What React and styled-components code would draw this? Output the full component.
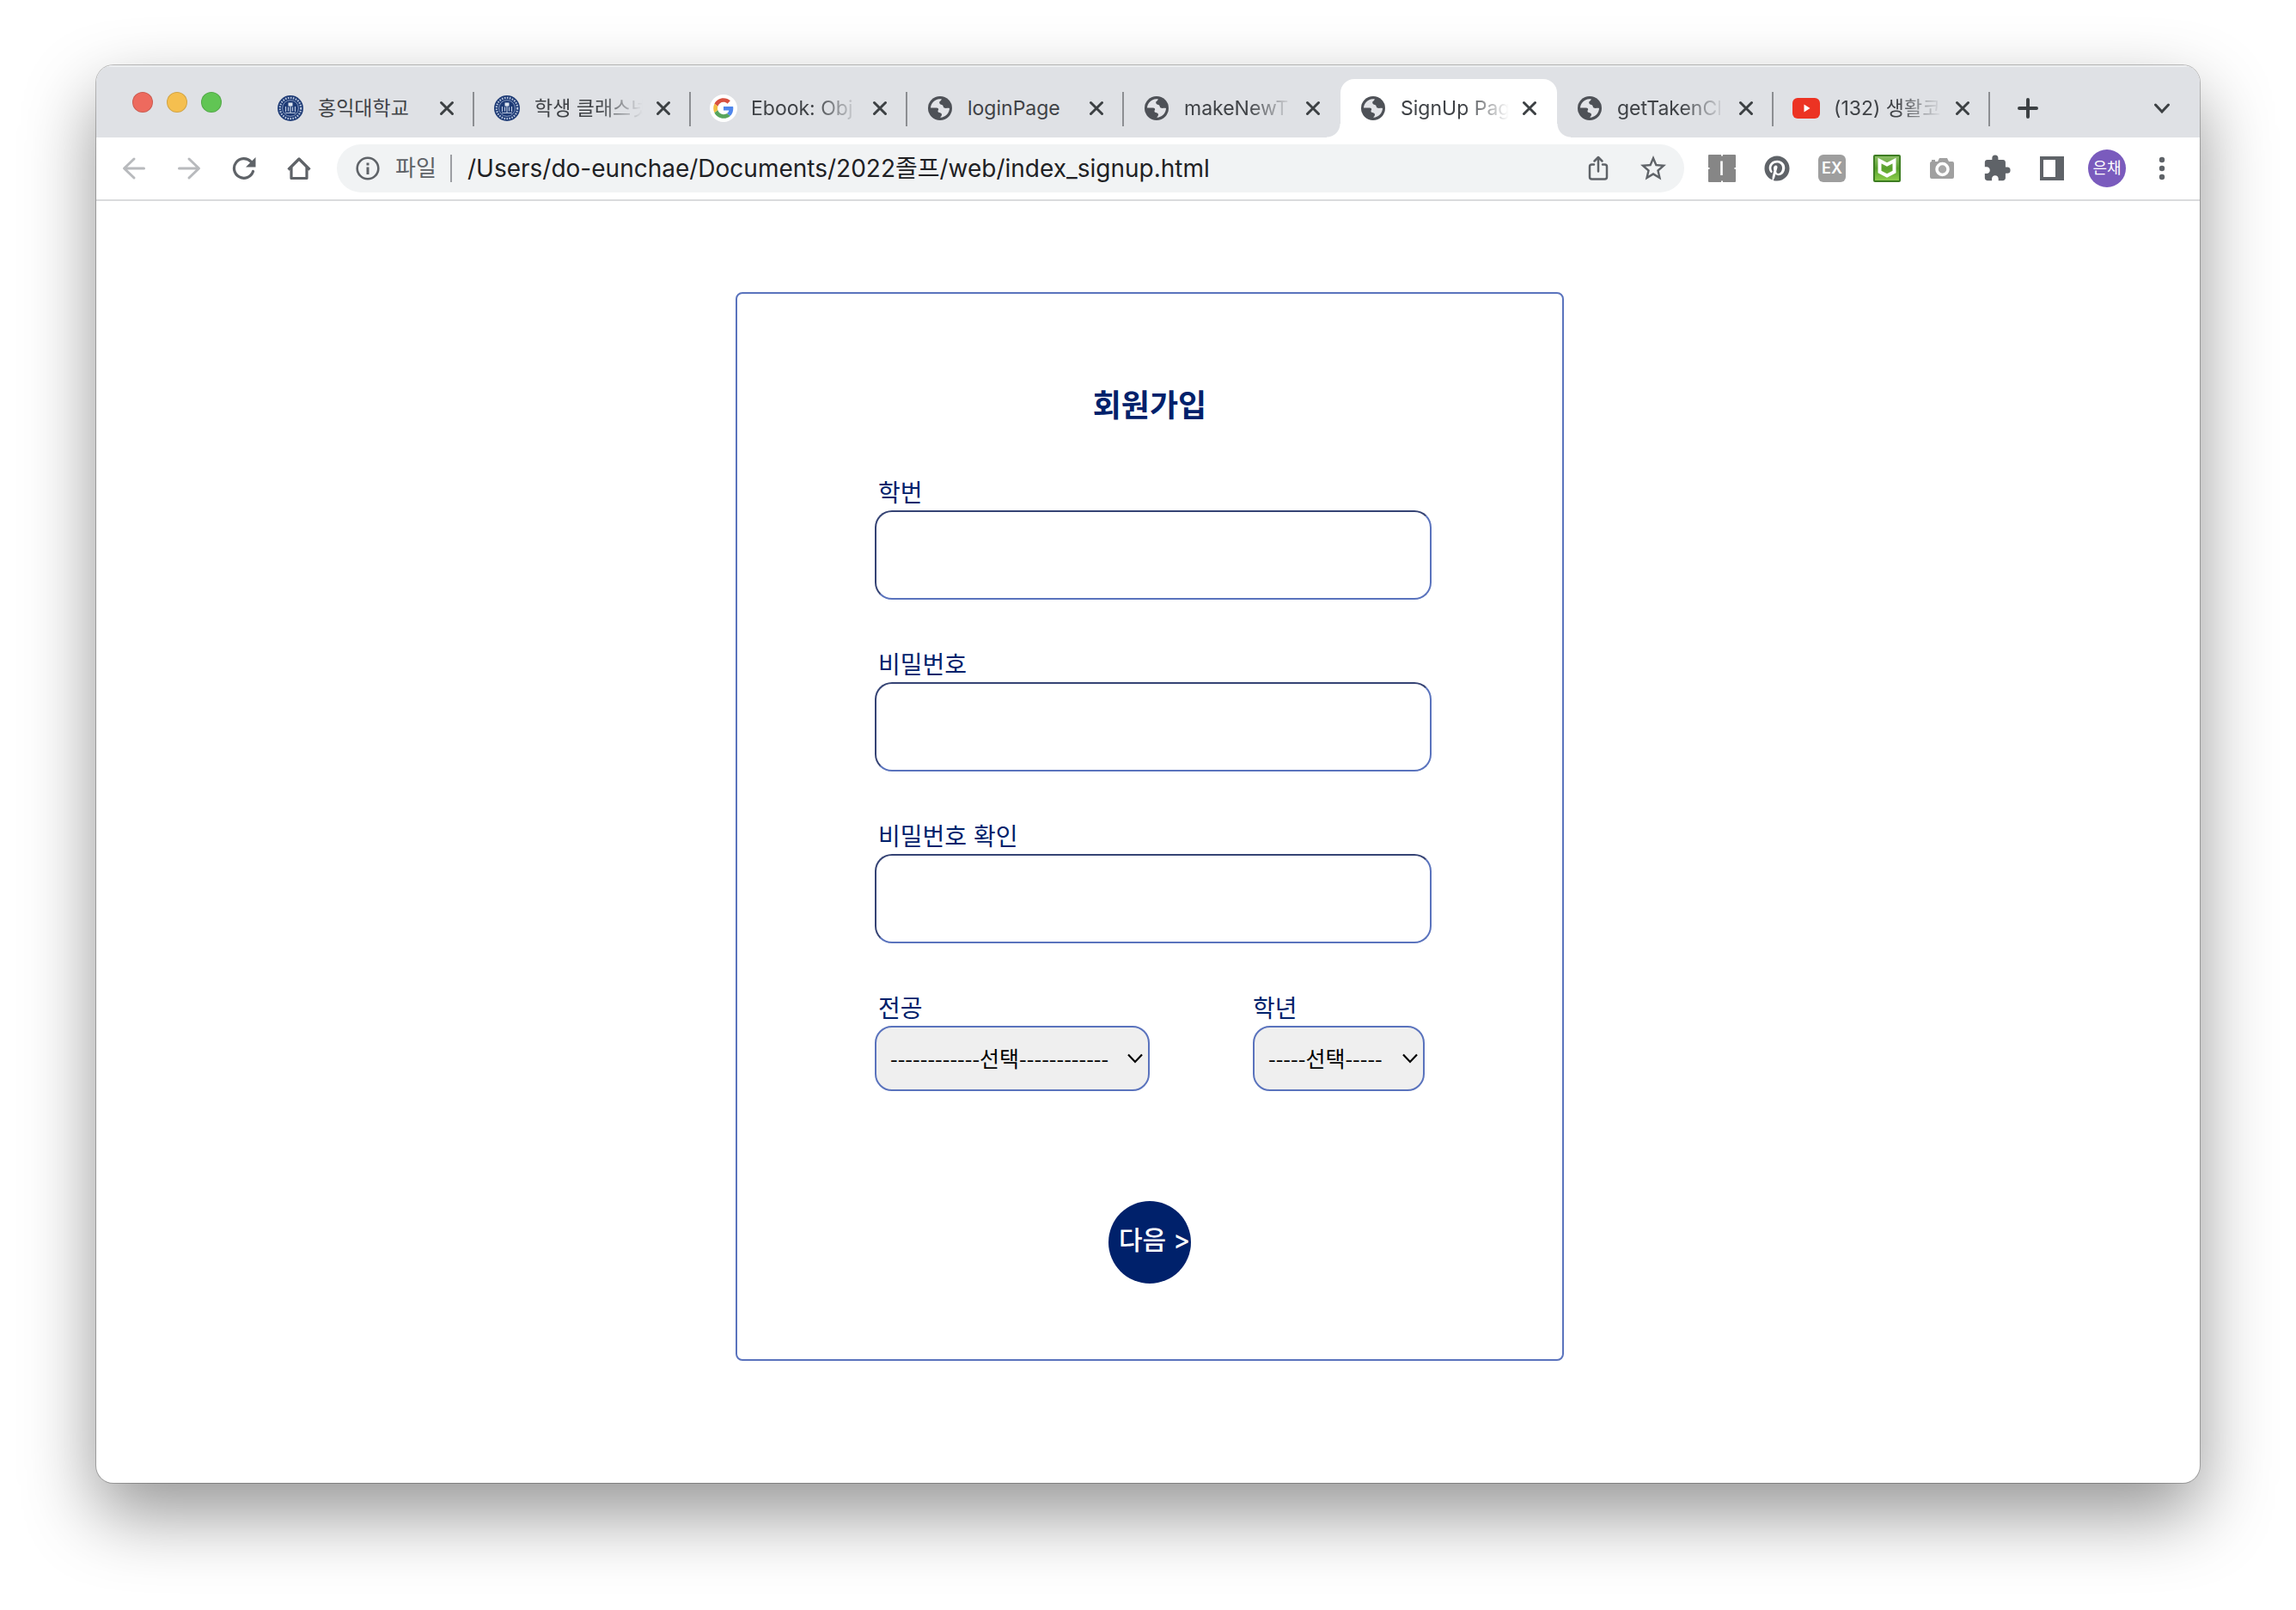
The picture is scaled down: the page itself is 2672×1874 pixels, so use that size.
import React from "react";
import styled, { createGlobalStyle, css } from "styled-components";
import { MdExtension, MdStarOutline } from "react-icons/md";
import { FaPinterest } from "react-icons/fa";

const GlobalStyle = createGlobalStyle`
  *, *::before, *::after { box-sizing: border-box; }
  body {
    margin: 0;
    background: #fff;
    font-family: Inter, "Noto Sans CJK KR", sans-serif;
    color: #202124;
  }
  button, input, select { font: inherit; color: inherit; }
`;

/* ---------- window frame ---------- */

const Desktop = styled.div`
  display: flex;
  min-height: 100vh;
  padding: 76px 112px 148px;
`;

const Window = styled.div`
  flex: 1;
  min-width: 0;
  display: flex;
  flex-direction: column;
  border-radius: 20px;
  overflow: hidden;
  background: #fff;
  box-shadow: 0 0 0 1px rgba(0, 0, 0, 0.24), 0 36px 84px rgba(0, 0, 0, 0.42);
`;

const TabStrip = styled.header`
  display: flex;
  align-items: flex-end;
  height: 84px;
  padding-right: 12px;
  background: #dfe1e5;
  box-shadow: inset 0 2px 0 #eceef0;
`;

const TrafficLights = styled.div`
  display: flex;
  flex: none;
  gap: 16px;
  width: 188px;
  height: 84px;
  padding: 31px 0 0 42px;
`;

const Light = styled.button`
  width: 24px;
  height: 24px;
  padding: 0;
  border: 1px solid rgba(0, 0, 0, 0.14);
  border-radius: 50%;
  background: ${(p) => p.$color};
`;

const Tabs = styled.div`
  display: flex;
`;

const Tab = styled.div`
  position: relative;
  display: flex;
  align-items: center;
  width: 252px;
  height: 68px;
  padding: 0 16px 0 22px;
  color: #3f4246;

  ${(p) =>
    p.$divided &&
    css`
      &::after {
        content: "";
        position: absolute;
        right: 0;
        top: 15px;
        width: 2px;
        height: 40px;
        background: #8c8e92;
      }
    `}

  ${(p) =>
    p.$active &&
    css`
      background: #fff;
      border-radius: 16px 16px 0 0;
      &::before,
      &::after {
        content: "";
        position: absolute;
        bottom: 0;
        width: 16px;
        height: 16px;
      }
      &::before {
        right: 100%;
        background: radial-gradient(circle at 0 0, transparent 15px, #fff 16px);
      }
      &::after {
        left: 100%;
        background: radial-gradient(circle at 100% 0, transparent 15px, #fff 16px);
      }
    `}
`;

const Favicon = styled.span`
  display: grid;
  place-items: center;
  flex: none;
  width: 32px;
  height: 32px;
  margin-right: 16px;
`;

const TabTitle = styled.span`
  flex: 1;
  min-width: 0;
  overflow: hidden;
  white-space: nowrap;
  font-size: 23px;
  line-height: 32px;
  ${(p) =>
    p.$faded &&
    css`
      mask-image: linear-gradient(to right, #000 calc(100% - 52px), transparent);
    `}
`;

const IconButton = styled.button`
  display: grid;
  place-items: center;
  flex: none;
  width: ${(p) => p.$size || 64}px;
  height: ${(p) => p.$size || 64}px;
  padding: 0;
  border: 0;
  background: none;
  color: ${(p) => (p.$muted ? "#b8babd" : "#5f6368")};
`;

const CloseButton = styled(IconButton)`
  margin-left: 8px;
  color: #3c4043;
`;

const StripButton = styled(IconButton)`
  height: 68px;
  color: #3c4043;
  margin-left: ${(p) => (p.$end ? "auto" : "12px")};
`;

/* ---------- toolbar ---------- */

const Toolbar = styled.nav`
  display: flex;
  align-items: center;
  height: 74px;
  padding: 0 12px;
  background: #fff;
  border-bottom: 2px solid #dadbdd;
`;

const AddressBar = styled.div`
  flex: 1;
  min-width: 0;
  display: flex;
  align-items: center;
  height: 56px;
  margin: 0 12px;
  padding: 0 4px;
  border-radius: 28px;
  background: #f1f3f4;
`;

const Scheme = styled.label`
  flex: none;
  width: 66px;
  border-right: 2px solid #9c9ea2;
  font-size: 26px;
  line-height: 32px;
  color: #5f6368;
`;

const UrlInput = styled.input`
  flex: 1;
  min-width: 0;
  padding: 0 0 0 18px;
  border: 0;
  outline: 0;
  background: none;
  font-size: 28px;
  line-height: 40px;
  color: #202124;
`;

const ExLabel = styled.span`
  display: grid;
  place-items: center;
  width: 32px;
  height: 32px;
  border-radius: 6px;
  background: #9e9e9e;
  color: #fff;
  font-size: 18px;
  font-weight: 600;
  line-height: 20px;
`;

const Avatar = styled.span`
  display: grid;
  place-items: center;
  width: 44px;
  height: 44px;
  border-radius: 50%;
  background: #7a5bbd;
  color: #fff;
  font-size: 18px;
  line-height: 24px;
`;

/* ---------- sign-up page ---------- */

const Page = styled.main`
  flex: 1;
  display: flex;
  justify-content: center;
  align-items: flex-start;
  padding: 106px 0 142px 4px;
`;

const Card = styled.form`
  width: 964px;
  max-width: 100%;
  padding: 102px 152px 88px 160px;
  border: 2px solid #5a73bd;
  border-radius: 8px;
  background: #fff;
  color: #00216b;
`;

const Title = styled.h1`
  margin: 0 8px 54px 0;
  font-size: 36px;
  line-height: 56px;
  font-weight: 700;
  text-align: center;
`;

const Fields = styled.div`
  display: flex;
  flex-direction: column;
  gap: 56px;
`;

const FieldRow = styled.div`
  display: flex;
  gap: 120px;
`;

const Field = styled.div`
  display: flex;
  flex-direction: column;
  ${(p) => p.$width && `width: ${p.$width}px;`}
`;

const Label = styled.label`
  padding-left: ${(p) => (p.$flush ? 0 : 4)}px;
  font-size: 28px;
  line-height: 40px;
  font-weight: 400;
`;

const TextInput = styled.input`
  width: 100%;
  height: 104px;
  padding: 0 20px;
  border: 2px solid;
  border-color: #354374 #5a73bd #5a73bd #354374;
  border-radius: 20px;
  outline: 0;
  background: #fff;
  font-size: 28px;
`;

const SelectBox = styled.div`
  position: relative;
  display: flex;
  svg {
    position: absolute;
    right: 7px;
    top: 50%;
    margin-top: -6px;
    pointer-events: none;
  }
`;

const Select = styled.select`
  appearance: none;
  width: 100%;
  height: 76px;
  padding: 0 16px 2px;
  border: 2px solid #5a73bd;
  border-radius: 20px;
  outline: 0;
  background: #efefef;
  color: #000;
  font-family: "Noto Sans CJK KR", sans-serif;
  font-size: 25px;
  font-weight: 400;
`;

const NextButton = styled.button`
  display: block;
  width: 96px;
  height: 96px;
  margin: 128px auto 0 272px;
  padding: 0 0 6px 12px;
  border: 0;
  border-radius: 50%;
  background: #00216b;
  color: #fff;
  font-size: 30px;
  line-height: 40px;
  font-weight: 500;
  text-align: left;
  white-space: nowrap;
`;

/* ---------- drawings ---------- */

const SealIcon = () => (
  <svg width="32" height="32" viewBox="0 0 32 32" fill="none">
    <circle cx="16" cy="16" r="15" fill="#1d3a75" />
    <circle cx="16" cy="16" r="12.2" stroke="#b9c6de" strokeWidth="2.2" strokeDasharray="1.6 1.4" />
    <circle cx="16" cy="16" r="9.4" stroke="#93a5c8" strokeWidth="0.9" />
    <path d="M13.5 9.5h5v4h-5z" fill="#dfe6f1" />
    <path d="M10.5 14v6M13.5 14.5v5M18.500 14.500v5M21.500 14v6M16 13v8M10 21.500h12" stroke="#b9c6de" strokeWidth="1.2" />
  </svg>
);

const GoogleIcon = () => (
  <svg width="32" height="32" viewBox="0 0 32 32">
    <circle cx="16" cy="16" r="16" fill="#fff" />
    <g transform="translate(4.200 4.200) scale(0.492)">
      <path fill="#d8503f" d="M24 9.500c3.540 0 6.710 1.220 9.210 3.600l6.850-6.850C35.900 2.380 30.470 0 24 0 14.620 0 6.510 5.380 2.560 13.220l7.980 6.190C12.430 13.720 17.740 9.500 24 9.500z" />
      <path fill="#4f86ec" d="M46.980 24.550c0-1.570-.15-3.090-.38-4.550H24v9.020h12.940c-.58 2.960-2.260 5.480-4.780 7.180l7.730 6c4.510-4.180 7.090-10.360 7.090-17.650z" />
      <path fill="#f2bd42" d="M10.530 28.590c-.48-1.450-.76-2.990-.76-4.590s.27-3.140.76-4.590l-7.980-6.190C.92 16.460 0 20.120 0 24c0 3.880.92 7.540 2.560 10.780l7.970-6.190z" />
      <path fill="#58a55c" d="M24 48c6.480 0 11.930-2.130 15.890-5.810l-7.730-6c-2.150 1.450-4.920 2.300-8.160 2.300-6.260 0-11.570-4.220-13.470-9.910l-7.980 6.190C6.510 42.620 14.620 48 24 48z" />
    </g>
  </svg>
);

const GlobeIcon = () => (
  <svg width="28" height="28" viewBox="0 0 28 28">
    <circle cx="14" cy="14" r="14" fill="#4e5157" />
    <path
      fill="#e3e4e8"
      d="M3 13.500C3.300 8 7.800 3.600 13.500 3.200C14.500 3.200 15.200 3.300 16 3.500L14.500 5.500C13 6 13 7.500 13.500 8.600C14 10 16 9.600 17 10.500C18 11.500 17.500 13 18.800 13.600C20.500 14.500 23 13.500 25 14C24.800 19.500 21 23.500 16 24.700L14 24.500C16 23 16.500 21.500 15.500 20C14.500 18.800 12 19.500 11.500 18C11 16.500 13 15.500 11.800 14.300C10.500 13.200 8 13.600 3 13.500Z"
    />
  </svg>
);

const YoutubeIcon = () => (
  <svg width="32" height="32" viewBox="0 0 32 32">
    <rect x="0" y="4" width="32" height="24" rx="6" fill="#ec3323" />
    <path d="M13.500 11.500L20.500 16L13.500 20.500Z" fill="#fff" />
  </svg>
);

const CloseIcon = () => (
  <svg width="18" height="18" viewBox="0 0 18 18" stroke="currentColor" strokeWidth="3" strokeLinecap="round">
    <path d="M2.500 2.500L15.500 15.500M15.500 2.500L2.500 15.500" />
  </svg>
);

const PlusIcon = () => (
  <svg width="24" height="24" viewBox="0 0 24 24" stroke="currentColor" strokeWidth="4" strokeLinecap="round">
    <path d="M12 2v20M2 12h20" />
  </svg>
);

const TabMenuIcon = () => (
  <svg width="20" height="12" viewBox="0 0 20 12" fill="none" stroke="currentColor" strokeWidth="3" strokeLinecap="round">
    <path d="M2.500 2L10 10L17.500 2" />
  </svg>
);

const ArrowIcon = ({ forward }) => (
  <svg width="28" height="28" viewBox="0 0 28 28" fill="none" stroke="currentColor" strokeWidth="3" strokeLinecap="round" strokeLinejoin="round">
    <path d={forward ? "M2.500 14H25M14 3L25.500 14L14 25" : "M25.500 14H3M14 3L2.500 14L14 25"} />
  </svg>
);

const ReloadIcon = () => (
  <svg width="28" height="28" viewBox="0 0 28 28" fill="none">
    <path d="M24.500 17.500A11.300 11.300 0 1 1 22 6.200" stroke="currentColor" strokeWidth="3.200" strokeLinecap="round" />
    <path d="M27.500 1V12.500H16Z" fill="currentColor" />
  </svg>
);

const HomeIcon = () => (
  <svg width="28" height="28" viewBox="0 0 28 28" fill="none" stroke="currentColor" strokeWidth="3.200" strokeLinejoin="round">
    <path d="M1.500 15.500L14 3L26.500 15.500" />
    <path d="M5 13V25.500H23V13" />
  </svg>
);

const InfoIcon = () => (
  <svg width="28" height="28" viewBox="0 0 28 28" fill="none">
    <circle cx="14" cy="14" r="12.300" stroke="currentColor" strokeWidth="2.600" />
    <path d="M14 12.500V21M14 7.500v3" stroke="currentColor" strokeWidth="3" />
  </svg>
);

const ShareIcon = () => (
  <svg width="24" height="30" viewBox="0 0 24 30" fill="none" stroke="currentColor" strokeWidth="2.500" strokeLinecap="round" strokeLinejoin="round">
    <path d="M7 10.500H4.500a2.500 2.500 0 0 0-2.500 2.500V25a2.500 2.500 0 0 0 2.500 2.500h15A2.500 2.500 0 0 0 22 25V13a2.500 2.500 0 0 0-2.500-2.500H17" />
    <path d="M12 18.500V2.500M7.500 6.500L12 2L16.500 6.500" />
  </svg>
);

const CursorSquareIcon = () => (
  <svg width="32" height="32" viewBox="0 0 32 32">
    <rect width="32" height="32" rx="1" fill="#868686" />
    <path d="M15.500 7.500V24" stroke="#fff" strokeWidth="2.600" />
    <path d="M16 0v1.500M16 30.500V32M0 16h1.500M30.500 16H32" stroke="#fff" strokeWidth="2" />
  </svg>
);

const ShieldIcon = () => (
  <svg width="32" height="32" viewBox="0 0 32 32">
    <defs>
      <linearGradient id="shieldFill" x1="0" y1="0" x2="0" y2="1">
        <stop offset="0" stopColor="#8fc06a" />
        <stop offset="0.500" stopColor="#57a02b" />
        <stop offset="1" stopColor="#8fd04e" />
      </linearGradient>
    </defs>
    <rect x="1" y="1" width="30" height="30" rx="1" fill="url(#shieldFill)" stroke="#3d7d22" strokeWidth="2" />
    <path d="M7.500 7L16 11.500L24.500 7V20L16 24.500L7.500 20Z" fill="none" stroke="#fff" strokeWidth="4" />
  </svg>
);

const CameraIcon = () => (
  <svg width="30" height="28" viewBox="0 0 30 28">
    <path d="M3 4h4v2h3l2-4h9l2 4h4a2 2 0 0 1 2 2v16a2 2 0 0 1-2 2H3a2 2 0 0 1-2-2V8a2 2 0 0 1 2-2z" fill="#a0a0a0" />
    <circle cx="15.500" cy="15" r="6.500" fill="#a8a8a8" stroke="#fff" strokeWidth="3.500" />
  </svg>
);

const SidePanelIcon = () => (
  <svg width="28" height="28" viewBox="0 0 28 28">
    <path fillRule="evenodd" d="M0 0h28v28H0zM4 4v20h14V4z" fill="currentColor" />
  </svg>
);

const DotsIcon = () => (
  <svg width="8" height="28" viewBox="0 0 8 28" fill="currentColor">
    <circle cx="4" cy="4" r="3.200" />
    <circle cx="4" cy="14" r="3.200" />
    <circle cx="4" cy="24" r="3.200" />
  </svg>
);

const SelectArrow = () => (
  <svg width="20" height="12" viewBox="0 0 20 12" fill="none" stroke="#000" strokeWidth="2.200">
    <path d="M2 1.500L10 10L18 1.500" />
  </svg>
);

/* ---------- data ---------- */

const tabs = [
  { title: "홍익대학교", icon: SealIcon, divided: true },
  { title: "학생 클래스넷", icon: SealIcon, divided: true, faded: true },
  { title: "Ebook: Obj", icon: GoogleIcon, divided: true, faded: true },
  { title: "loginPage", icon: GlobeIcon, divided: true },
  { title: "makeNewT", icon: GlobeIcon, faded: true },
  { title: "SignUp Pag", icon: GlobeIcon, active: true, faded: true },
  { title: "getTakenCl", icon: GlobeIcon, divided: true, faded: true },
  { title: "(132) 생활코", icon: YoutubeIcon, divided: true, faded: true },
];

const textFields = [
  { id: "studentId", label: "학번", type: "text" },
  { id: "password", label: "비밀번호", type: "password" },
  { id: "passwordCheck", label: "비밀번호 확인", type: "password" },
];

const selects = [
  { id: "major", label: "전공", option: "------------선택------------", width: 320 },
  { id: "year", label: "학년", option: "-----선택-----", width: 200, flush: true },
];

export default function App() {
  return (
    <>
      <GlobalStyle />
      <Desktop>
        <Window>
          <TabStrip>
            <TrafficLights>
              <Light $color="#ed6a5e" aria-label="Close window" />
              <Light $color="#f5bf4f" aria-label="Minimize window" />
              <Light $color="#61c554" aria-label="Zoom window" />
            </TrafficLights>
            <Tabs>
              {tabs.map(({ title, icon: Icon, active, divided, faded }) => (
                <Tab key={title} $active={active} $divided={divided}>
                  <Favicon>
                    <Icon />
                  </Favicon>
                  <TabTitle $faded={faded}>{title}</TabTitle>
                  <CloseButton $size={32} aria-label="Close tab">
                    <CloseIcon />
                  </CloseButton>
                </Tab>
              ))}
            </Tabs>
            <StripButton aria-label="New tab">
              <PlusIcon />
            </StripButton>
            <StripButton $end aria-label="Search tabs">
              <TabMenuIcon />
            </StripButton>
          </TabStrip>

          <Toolbar>
            <IconButton $muted aria-label="Back">
              <ArrowIcon />
            </IconButton>
            <IconButton $muted aria-label="Forward">
              <ArrowIcon forward />
            </IconButton>
            <IconButton aria-label="Reload">
              <ReloadIcon />
            </IconButton>
            <IconButton aria-label="Home">
              <HomeIcon />
            </IconButton>
            <AddressBar>
              <IconButton aria-label="Site information">
                <InfoIcon />
              </IconButton>
              <Scheme htmlFor="url">파일</Scheme>
              <UrlInput id="url" type="text" defaultValue="/Users/do-eunchae/Documents/2022졸프/web/index_signup.html" />
              <IconButton aria-label="Share">
                <ShareIcon />
              </IconButton>
              <IconButton aria-label="Bookmark">
                <MdStarOutline size={36} />
              </IconButton>
            </AddressBar>
            <IconButton aria-label="Cursor extension">
              <CursorSquareIcon />
            </IconButton>
            <IconButton aria-label="Pinterest">
              <FaPinterest size={30} />
            </IconButton>
            <IconButton aria-label="EX extension">
              <ExLabel>EX</ExLabel>
            </IconButton>
            <IconButton aria-label="Shield extension">
              <ShieldIcon />
            </IconButton>
            <IconButton aria-label="Camera extension">
              <CameraIcon />
            </IconButton>
            <IconButton aria-label="Extensions">
              <MdExtension size={34} />
            </IconButton>
            <IconButton aria-label="Side panel">
              <SidePanelIcon />
            </IconButton>
            <IconButton aria-label="Profile">
              <Avatar>은채</Avatar>
            </IconButton>
            <IconButton aria-label="Menu">
              <DotsIcon />
            </IconButton>
          </Toolbar>

          <Page>
            <Card onSubmit={(e) => e.preventDefault()}>
              <Title>회원가입</Title>
              <Fields>
                {textFields.map((f) => (
                  <Field key={f.id}>
                    <Label htmlFor={f.id}>{f.label}</Label>
                    <TextInput id={f.id} type={f.type} />
                  </Field>
                ))}
                <FieldRow>
                  {selects.map((s) => (
                    <Field key={s.id} $width={s.width}>
                      <Label htmlFor={s.id} $flush={s.flush}>
                        {s.label}
                      </Label>
                      <SelectBox>
                        <Select id={s.id}>
                          <option>{s.option}</option>
                        </Select>
                        <SelectArrow />
                      </SelectBox>
                    </Field>
                  ))}
                </FieldRow>
              </Fields>
              <NextButton type="submit">다음 &gt;</NextButton>
            </Card>
          </Page>
        </Window>
      </Desktop>
    </>
  );
}
